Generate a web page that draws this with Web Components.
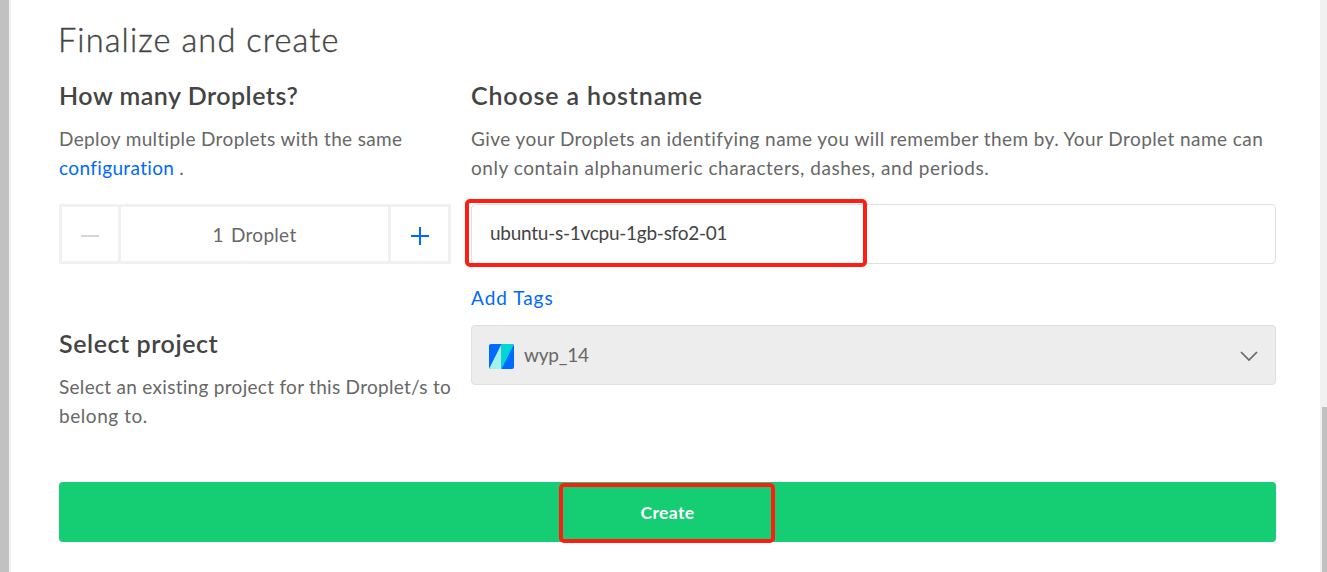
<!DOCTYPE html>
<html lang="en">
<head>
<meta charset="utf-8">
<title>Finalize and create</title>
<style>
html, body { margin: 0; height: 100%; overflow: hidden; background: #fff; }
body { font-family: Lato, "Open Sans", sans-serif; color: #676767; font-variant-ligatures: none; }
</style>
</head>
<body>
<create-page></create-page>
<script>
const define = (name, html) => customElements.define(name, class extends HTMLElement {
  constructor() {
    super();
    const t = document.createElement('template');
    t.innerHTML = html;
    this.attachShadow({ mode: 'open' }).append(t.content.cloneNode(true));
  }
});

define('section-title', `
<style>
:host { display: block; }
h2 { margin: 0; font-size: 25px; line-height: 32px; font-weight: 600; color: #444; white-space: nowrap; }
</style>
<h2><slot></slot></h2>`);

define('body-copy', `
<style>
:host { display: block; font-size: 19px; line-height: 29px; color: #676767; white-space: nowrap; }
</style>
<slot></slot>`);

define('text-link', `
<style>
:host { display: inline; }
a { color: #0069ff; text-decoration: none; }
</style>
<a><slot></slot></a>`);

define('droplet-stepper', `
<style>
:host { display: grid; grid-template-columns: 56px 1fr 57px; gap: 3px; box-sizing: border-box; height: 60px; border: 3px solid #f1f1f1; background: #f1f1f1; }
div { display: flex; align-items: center; justify-content: center; background: #fff; font-size: 19px; white-space: pre; }
svg { display: block; margin-top: 4px; }
</style>
<div><svg width="18" height="18" viewBox="0 0 18 18"><path d="M0 9h18" stroke="#d5d5d5" stroke-width="2"/></svg></div>
<div><slot></slot></div>
<div><svg width="18" height="18" viewBox="0 0 18 18"><path d="M0 9h18M9 0v18" stroke="#0069ff" stroke-width="2"/></svg></div>`);

define('host-field', `
<style>
:host { display: flex; align-items: center; position: relative; box-sizing: border-box; height: 60px; padding: 0 0 3px 18px; border: 1px solid #dfdfdf; border-radius: 4px; background: #fff; font-size: 19px; color: #444; }
</style>
<slot></slot><slot name="mark"></slot>`);

define('project-select', `
<style>
:host { display: flex; align-items: center; box-sizing: border-box; height: 60px; padding: 2px 17px 0; border: 1px solid #dfdfdf; border-radius: 4px; background: #ededed; font-size: 19px; }
.icon { margin-right: 10px; }
.name { flex: 1; padding-bottom: 3px; }
</style>
<svg class="icon" width="25" height="25" viewBox="0 0 25 25"><defs><clipPath id="c"><rect width="25" height="25" rx="2"/></clipPath></defs><g clip-path="url(#c)"><path fill="#0069ff" d="M0 0h25v25H0z"/><path fill="#a2f2ed" d="M12.5 0v25H0z"/><path fill="#00d7d2" d="M12.5 0H25L12.5 25z"/></g></svg>
<span class="name"><slot></slot></span>
<svg width="18" height="12" viewBox="0 0 18 12"><path d="M1 2l8 8 8-8" fill="none" stroke="#676767" stroke-width="1.7"/></svg>`);

define('create-button', `
<style>
:host { display: flex; align-items: center; justify-content: center; position: relative; height: 60px; padding: 1px 0 0 0; box-sizing: border-box; border-radius: 4px; background: #15cd72; color: #fff; font-size: 17.5px; font-weight: 700; }
</style>
<slot></slot><slot name="mark"></slot>`);

define('red-mark', `
<style>
:host { display: block; position: absolute; box-sizing: border-box; border: 4px solid #ff1d12; border-radius: 5px; pointer-events: none; }
</style>`);

define('create-page', `
<style>
:host { display: flex; height: 572px; overflow: hidden; background: #fff; }
.edge { width: 9px; background: #c1c1c1; border-right: 2px solid #f1f1f1; }
main { flex: 1; padding: 21px 44px 0 48px; }
h1 { margin: 0 0 0 -1px; font-size: 32.5px; line-height: 38px; font-weight: 300; color: #444; -webkit-text-stroke: .4px #444; letter-spacing: 1.13px; }
.cols { display: grid; grid-template-columns: 392px 1fr; column-gap: 20px; margin-top: 20px; }
section-title { margin-bottom: 13px; }
.control { margin-top: 22px; }
.tags { margin: 19px 0 13px; }
.project { margin-top: 63px; }
create-button { margin-top: 52px; }
.scroll { box-sizing: border-box; width: 7px; padding: 407px 0 0 2px; background: #f1f1f1; }
.thumb { height: 165px; background: #c1c1c1; }
</style>
<div class="edge"></div>
<main>
  <h1>Finalize and create</h1>
  <div class="cols">
    <div>
      <section-title style="letter-spacing:.5px">How many Droplets?</section-title>
      <body-copy><span style="letter-spacing:.36px">Deploy multiple Droplets with the same</span><br><text-link><span style="letter-spacing:.36px">configuration</span></text-link> .</body-copy>
      <droplet-stepper class="control"><span style="letter-spacing:.3px;word-spacing:-1.6px">1  Droplet</span></droplet-stepper>
      <section-title class="project" style="letter-spacing:.57px">Select project</section-title>
      <body-copy><span style="letter-spacing:.29px">Select an existing project for this Droplet/s to</span><br><span style="letter-spacing:.55px">belong to.</span></body-copy>
    </div>
    <div>
      <section-title style="letter-spacing:.85px">Choose a hostname</section-title>
      <body-copy><span style="letter-spacing:.43px">Give your Droplets an identifying name you will remember them by. Your Droplet name can</span><br><span style="letter-spacing:.54px">only contain alphanumeric characters, dashes, and periods.</span></body-copy>
      <host-field class="control"><span style="letter-spacing:-.26px">ubuntu-s-1vcpu-1gb-sfo2-01</span><red-mark slot="mark" style="left:-7.5px;top:-6px;width:402px;height:67.5px"></red-mark></host-field>
      <body-copy class="tags"><text-link><span style="letter-spacing:.98px">Add Tags</span></text-link></body-copy>
      <project-select><span style="letter-spacing:-.2px">wyp_14</span></project-select>
    </div>
  </div>
  <create-button><span style="letter-spacing:.4px">Create</span><red-mark slot="mark" style="left:499.5px;top:1px;width:216px;height:60px"></red-mark></create-button>
</main>
<div class="scroll"><div class="thumb"></div></div>`);
</script>
</body>
</html>
